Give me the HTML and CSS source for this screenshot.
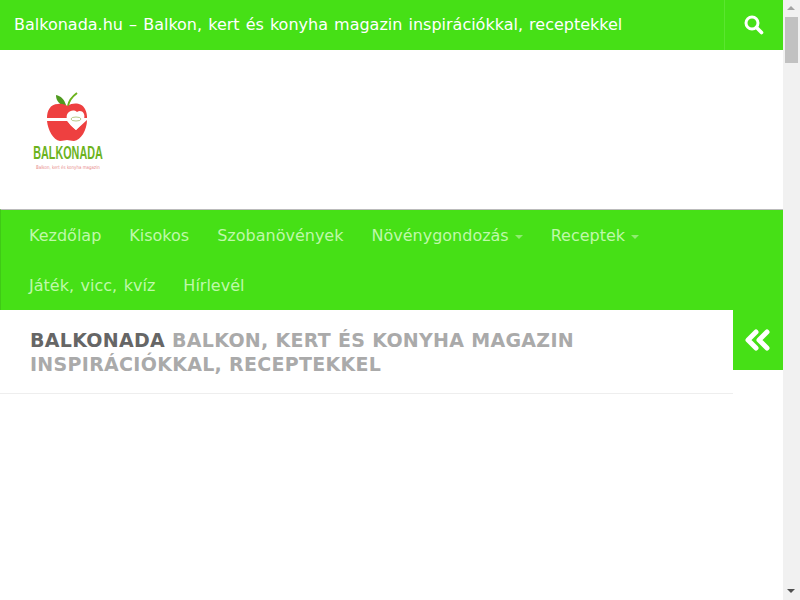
FILE: index.html
```html
<!DOCTYPE html>
<html lang="hu">
<head>
  <meta charset="UTF-8">
  <title>Balkonada</title>
  <link rel="stylesheet" href="styles.css">
</head>
<body>

  <div class="page">
    <div class="topbar">
      <div class="topbar-title">Balkonada.hu – Balkon, kert és konyha magazin inspirációkkal, receptekkel</div>
      <div class="topbar-search">
        <svg width="20" height="20" viewBox="0 0 20 20">
          <circle cx="8" cy="8" r="6" fill="none" stroke="#fff" stroke-width="3"/>
          <path d="M12.5 12.5L17.5 17.5" stroke="#fff" stroke-width="3.6" stroke-linecap="round"/>
        </svg>
      </div>
    </div>

    <div class="header">
      <div class="logo">
        <svg class="logo-apple" width="44" height="50" viewBox="0 0 44 50">
          <path d="M20 13C18 7 15 4 10 3C10 9 14 14 20 13Z" fill="#4f9a1f"/>
          <path d="M22 14C23 8 27 4 31 1" fill="none" stroke="#6cb31d" stroke-width="2"/>
          <path d="M22 14C27 10 36 11 39 17C41 21 41 24 41 26H1C1 19 4 12 12 12C16 11 19 13 22 14Z" fill="#ee4040"/>
          <path d="M1 29H21L30 38L41 28C41 38 35 48 28 49C25 49 23 48 21 48C19 48 17 49 14 49C7 48 2 38 1 29Z" fill="#ee4040"/>
          <path d="M21 27C19 21 26 16 31 20C35 17 40 21 38 27C37 31 33 35 30 38C26 35 22 31 21 27Z" fill="#fff"/>
          <ellipse cx="30" cy="27" rx="5" ry="2" fill="none" stroke="#b7c98a" stroke-width="1"/>
        </svg>
        <div class="logo-name">BALKONADA</div>
        <div class="logo-tag">Balkon, kert és konyha magazin</div>
      </div>
    </div>

    <nav class="menu">
      <a class="menu-item">Kezdőlap</a>
      <a class="menu-item">Kisokos</a>
      <a class="menu-item">Szobanövények</a>
      <a class="menu-item has-sub">Növénygondozás</a>
      <a class="menu-item has-sub">Receptek</a>
      <a class="menu-item">Játék, vicc, kvíz</a>
      <a class="menu-item">Hírlevél</a>
    </nav>

    <div class="content">
      <div class="heading">
        <h1><strong>Balkonada</strong> <span>Balkon, kert és konyha magazin</span><br><span>inspirációkkal, receptekkel</span></h1>
      </div>
      <div class="sidebar-toggle">
        <svg width="26" height="22" viewBox="0 0 26 22">
          <path d="M11 3L3 11L11 19M22 3L14 11L22 19" fill="none" stroke="#fff" stroke-width="5" stroke-linecap="round" stroke-linejoin="round"/>
        </svg>
      </div>
    </div>
  </div>

  <div class="scrollbar">
    <div class="scroll-up"></div>
    <div class="scroll-track"><div class="scroll-thumb"></div></div>
    <div class="scroll-down"></div>
  </div>

</body>
</html>
```

FILE: styles.css
```css
html, body {
  height: 100%;
}

body {
  margin: 0;
  display: flex;
  overflow: hidden;
  background: #fff;
  font-family: "DejaVu Sans", Verdana, sans-serif;
}

.page {
  flex: 1;
  min-width: 0;
}

.topbar {
  display: flex;
  justify-content: space-between;
  height: 50px;
  background: #46e016;
}

.topbar-title {
  padding-left: 14px;
  color: #fff;
  font-size: 16px;
  line-height: 50px;
  word-spacing: 1px;
  white-space: nowrap;
}

.topbar-search {
  display: flex;
  align-items: center;
  justify-content: center;
  width: 58px;
  border-left: 1px solid #5be530;
}

.header {
  height: 159px;
  padding-left: 33px;
}

.logo {
  display: flex;
  flex-direction: column;
  align-items: center;
  width: 70px;
  padding-top: 42px;
}

.logo-name {
  margin-top: 2px;
  color: #6cb31d;
  font-family: "Liberation Sans", Arial, sans-serif;
  font-size: 18px;
  font-weight: bold;
  line-height: 18px;
  transform: scaleX(0.6);
  white-space: nowrap;
}

.logo-tag {
  margin-top: 2px;
  color: #e88a8a;
  font-size: 5px;
  line-height: 6px;
  white-space: nowrap;
  transform: scaleX(0.8);
}

.menu {
  display: flex;
  flex-wrap: wrap;
  height: 99px;
  padding: 1px 0 0 14px;
  background: #46e016;
  border: 1px solid #3fc916;
  border-top-color: #bbb;
  border-right: 0;
  border-bottom: 0;
}

.menu-item {
  padding: 0 14px;
  color: #bff9aa;
  font-size: 16px;
  line-height: 50px;
  word-spacing: 1.5px;
  white-space: nowrap;
}

.has-sub::after {
  content: "";
  display: inline-block;
  margin-left: 6px;
  vertical-align: 2px;
  border-top: 4px solid #8fec70;
  border-left: 4px solid transparent;
  border-right: 4px solid transparent;
}

.content {
  display: flex;
  align-items: flex-start;
}

.heading {
  flex: 1;
  height: 84px;
  padding: 18px 30px 0;
  box-sizing: border-box;
  border-bottom: 1px solid #eee;
}

h1 {
  margin: 0;
  color: #aaa;
  font-size: 19px;
  font-weight: bold;
  line-height: 24px;
  letter-spacing: 0.3px;
  text-transform: uppercase;
}

h1 strong {
  color: #666;
}

.sidebar-toggle {
  display: flex;
  align-items: center;
  justify-content: center;
  width: 50px;
  height: 60px;
  background: #46e016;
}

.scrollbar {
  display: flex;
  flex-direction: column;
  width: 17px;
  background: #f1f1f1;
}

.scroll-up, .scroll-down {
  position: relative;
  height: 17px;
}

.scroll-up::after, .scroll-down::after {
  content: "";
  position: absolute;
  left: 4px;
  border-left: 4px solid transparent;
  border-right: 4px solid transparent;
}

.scroll-up::after {
  top: 6px;
  border-bottom: 4px solid #a3a3a3;
}

.scroll-down::after {
  top: 6px;
  border-top: 4px solid #505050;
}

.scroll-track {
  flex: 1;
}

.scroll-thumb {
  height: 46px;
  margin: 0 2px;
  background: #c1c1c1;
}
```
